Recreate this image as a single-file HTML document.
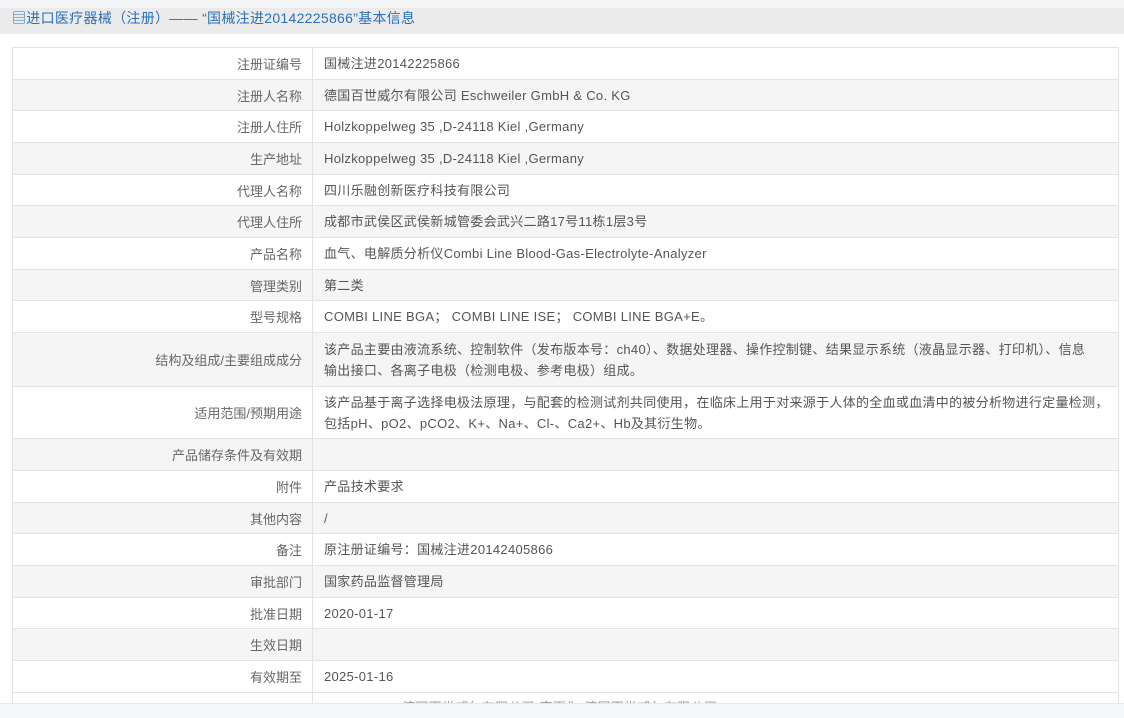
<!DOCTYPE html>
<html><head><meta charset="utf-8"><style>
body{margin:0;width:1124px;height:717px;overflow:hidden;background:#fff;font-family:"Liberation Sans","Noto Sans CJK SC",sans-serif;font-size:13px;color:#555;position:relative}
.top{position:absolute;left:0;top:0;width:1124px;height:10px;background:#f4f5f7}
.hdr{position:absolute;left:0;top:8px;width:1124px;height:26px;background:#ebebeb;color:#2a6fb8;font-size:14px;line-height:20px;padding-left:12px;box-sizing:border-box;letter-spacing:0.3px}
.r{position:absolute;left:12px;width:1107px;border-top:1px solid #e3e3e3;border-left:1px solid #e3e3e3;border-right:1px solid #e3e3e3;box-sizing:border-box}
.r.g{background:#f5f5f5}
.l{position:absolute;left:0;top:0;bottom:0;width:300px;border-right:1px solid #e3e3e3;text-align:right;padding-right:10px;box-sizing:border-box;display:flex;align-items:center;justify-content:flex-end;color:#666}
.v{position:absolute;left:311px;right:6px;top:0;bottom:0;display:flex;align-items:center;line-height:21px;letter-spacing:0.3px;white-space:nowrap}
.bot{position:absolute;left:0;top:703px;width:1124px;height:14px;background:#f6f7f9;border-top:1px solid #e8e8e8;z-index:5}
</style></head><body>
<div class="top"></div>
<div class="hdr">▤进口医疗器械（注册）—— “国械注进20142225866”基本信息</div>
<div class="r" style="top:47px;height:32px"><div class="l">注册证编号</div><div class="v">国械注进20142225866</div></div>
<div class="r g" style="top:79px;height:31px"><div class="l">注册人名称</div><div class="v">德国百世威尔有限公司 Eschweiler GmbH &amp; Co. KG</div></div>
<div class="r" style="top:110px;height:32px"><div class="l">注册人住所</div><div class="v">Holzkoppelweg 35 ,D-24118 Kiel ,Germany</div></div>
<div class="r g" style="top:142px;height:32px"><div class="l">生产地址</div><div class="v">Holzkoppelweg 35 ,D-24118 Kiel ,Germany</div></div>
<div class="r" style="top:174px;height:31px"><div class="l">代理人名称</div><div class="v">四川乐融创新医疗科技有限公司</div></div>
<div class="r g" style="top:205px;height:32px"><div class="l">代理人住所</div><div class="v">成都市武侯区武侯新城管委会武兴二路17号11栋1层3号</div></div>
<div class="r" style="top:237px;height:32px"><div class="l">产品名称</div><div class="v">血气、电解质分析仪Combi Line Blood-Gas-Electrolyte-Analyzer</div></div>
<div class="r g" style="top:269px;height:31px"><div class="l">管理类别</div><div class="v">第二类</div></div>
<div class="r" style="top:300px;height:32px"><div class="l">型号规格</div><div class="v">COMBI LINE BGA； COMBI LINE ISE； COMBI LINE BGA+E。</div></div>
<div class="r g" style="top:332px;height:54px"><div class="l">结构及组成/主要组成成分</div><div class="v">该产品主要由液流系统、控制软件（发布版本号：ch40）、数据处理器、操作控制键、结果显示系统（液晶显示器、打印机）、信息<br>输出接口、各离子电极（检测电极、参考电极）组成。</div></div>
<div class="r" style="top:386px;height:52px"><div class="l">适用范围/预期用途</div><div class="v">该产品基于离子选择电极法原理，与配套的检测试剂共同使用，在临床上用于对来源于人体的全血或血清中的被分析物进行定量检测，<br>包括pH、pO2、pCO2、K+、Na+、Cl-、Ca2+、Hb及其衍生物。</div></div>
<div class="r g" style="top:438px;height:32px"><div class="l">产品储存条件及有效期</div><div class="v"></div></div>
<div class="r" style="top:470px;height:32px"><div class="l">附件</div><div class="v">产品技术要求</div></div>
<div class="r g" style="top:502px;height:31px"><div class="l">其他内容</div><div class="v">/</div></div>
<div class="r" style="top:533px;height:32px"><div class="l">备注</div><div class="v">原注册证编号：国械注进20142405866</div></div>
<div class="r g" style="top:565px;height:32px"><div class="l">审批部门</div><div class="v">国家药品监督管理局</div></div>
<div class="r" style="top:597px;height:31px"><div class="l">批准日期</div><div class="v">2020-01-17</div></div>
<div class="r g" style="top:628px;height:32px"><div class="l">生效日期</div><div class="v"></div></div>
<div class="r" style="top:660px;height:32px"><div class="l">有效期至</div><div class="v">2025-01-16</div></div>
<div class="r" style="top:692px;height:11px;overflow:hidden"><div class="l"></div><div class="v" style="align-items:flex-start;padding-top:4px;color:#999">2016-01-15 “德国百世威尔有限公司”变更为“德国百世威尔有限公司”</div></div>
<div class="bot"></div>
</body></html>
